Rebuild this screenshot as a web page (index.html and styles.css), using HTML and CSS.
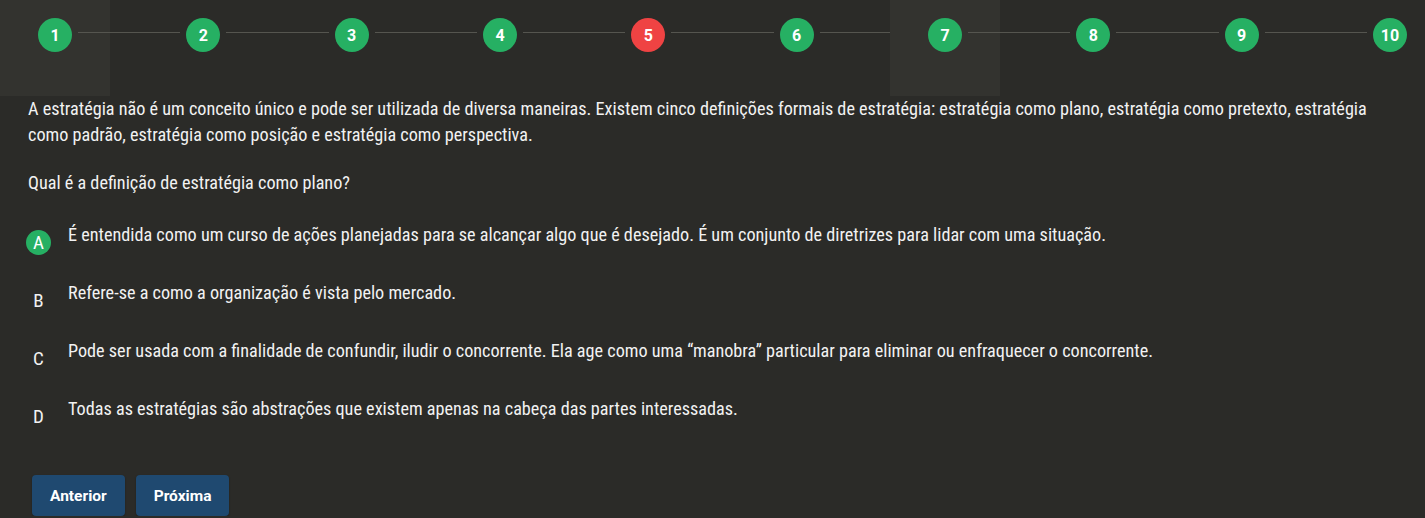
FILE: index.html
```html
<!DOCTYPE html>
<html lang="pt-BR">
<head>
<meta charset="utf-8">
<title>Questão 5</title>
<link rel="stylesheet" href="styles.css">
</head>
<body>
<div class="stepper-wrap">
  <nav class="stepper">
    <div class="step step-active"><span class="dot dot-ok">1</span></div>
    <div class="connector"></div>
    <div class="step"><span class="dot dot-ok">2</span></div>
    <div class="connector"></div>
    <div class="step"><span class="dot dot-ok">3</span></div>
    <div class="connector"></div>
    <div class="step"><span class="dot dot-ok">4</span></div>
    <div class="connector"></div>
    <div class="step"><span class="dot dot-err">5</span></div>
    <div class="connector"></div>
    <div class="step"><span class="dot dot-ok">6</span></div>
    <div class="connector"></div>
    <div class="step step-active"><span class="dot dot-ok">7</span></div>
    <div class="connector"></div>
    <div class="step"><span class="dot dot-ok">8</span></div>
    <div class="connector"></div>
    <div class="step"><span class="dot dot-ok">9</span></div>
    <div class="connector"></div>
    <div class="step"><span class="dot dot-ok">10</span></div>
  </nav>
</div>

<main class="question">
  <p class="statement">A estratégia não é um conceito único e pode ser utilizada de diversa maneiras. Existem cinco definições formais de estratégia: estratégia como plano, estratégia como pretexto, estratégia como padrão, estratégia como posição e estratégia como perspectiva.</p>
  <p class="ask">Qual é a definição de estratégia como plano?</p>

  <ul class="options">
    <li class="option">
      <span class="letter letter-correct">A</span>
      <span class="option-text">É entendida como um curso de ações planejadas para se alcançar algo que é desejado. É um conjunto de diretrizes para lidar com uma situação.</span>
    </li>
    <li class="option">
      <span class="letter">B</span>
      <span class="option-text">Refere-se a como a organização é vista pelo mercado.</span>
    </li>
    <li class="option">
      <span class="letter">C</span>
      <span class="option-text">Pode ser usada com a finalidade de confundir, iludir o concorrente. Ela age como uma “manobra” particular para eliminar ou enfraquecer o concorrente.</span>
    </li>
    <li class="option">
      <span class="letter">D</span>
      <span class="option-text">Todas as estratégias são abstrações que existem apenas na cabeça das partes interessadas.</span>
    </li>
  </ul>

  <div class="actions">
    <button class="btn" type="button">Anterior</button>
    <button class="btn" type="button">Próxima</button>
  </div>
</main>
</body>
</html>
```
FILE: styles.css
```css
html, body {
  margin: 0;
  padding: 0;
}

body {
  background: #2b2b28;
  color: #f2f2f2;
  font-family: "Roboto Condensed", "Roboto", "DejaVu Sans Condensed", sans-serif;
  font-size: 18.2px;
  overflow: hidden;
}

/* ---------- Stepper ---------- */
.stepper-wrap {
  overflow: hidden;
}

.stepper {
  display: flex;
  width: 1445px;
  height: 96px;
}

.step {
  flex: none;
  width: 110px;
  height: 96px;
  display: flex;
  justify-content: center;
  align-items: flex-start;
  padding-top: 18px;
  box-sizing: border-box;
}

.step-active {
  background: #33332f;
}

.dot {
  width: 34px;
  height: 34px;
  border-radius: 50%;
  display: flex;
  align-items: center;
  justify-content: center;
  color: #ffffff;
  font-family: "Roboto", sans-serif;
  font-weight: 700;
  font-size: 16px;
  position: relative;
  z-index: 1;
}

.dot-ok {
  background: #26b063;
}

.dot-err {
  background: #ef4343;
}

.connector {
  flex: 1 1 0;
  height: 1px;
  margin: 32px -32px 0;
  background: #55554f;
}

/* ---------- Question ---------- */
.question {
  padding: 0 28px;
}

.statement {
  margin: 0;
  line-height: 26px;
}

.ask {
  margin: 22px 0 0;
  line-height: 26px;
}

.options {
  list-style: none;
  margin: 26px 0 0;
  padding: 0;
  display: flex;
  flex-direction: column;
  gap: 25px;
}

.option {
  display: flex;
  align-items: flex-start;
}

.letter {
  flex: none;
  width: 25px;
  height: 25px;
  margin: 8px 0 0 -2px;
  border-radius: 50%;
  display: flex;
  align-items: center;
  justify-content: center;
  font-size: 19px;
  line-height: 1;
  color: #f2f2f2;
}

.letter-correct {
  background: #26b063;
  color: #ffffff;
}

.option-text {
  margin-left: 17px;
  line-height: 26px;
}

/* ---------- Actions ---------- */
.actions {
  display: flex;
  gap: 11px;
  margin: 46px 0 0 4px;
}

.btn {
  height: 41px;
  padding: 0 18px;
  border: 0;
  border-radius: 4px;
  background: #1f4970;
  color: #ffffff;
  font-family: "Roboto", sans-serif;
  font-weight: 700;
  font-size: 15.5px;
  cursor: pointer;
  box-shadow: 0 1px 2px rgba(0, 0, 0, 0.35);
}
```
